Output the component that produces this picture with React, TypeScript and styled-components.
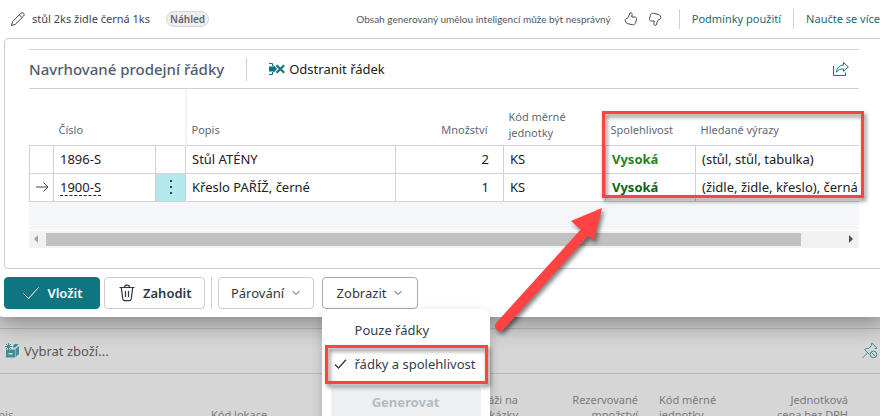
import React from "react";
import styled, { createGlobalStyle, css } from "styled-components";

const teal = "#0f7580";
const line = "#cdd0d5";
const red = "#ff4343";

const GlobalStyle = createGlobalStyle`
  *, *::before, *::after { box-sizing: border-box; }
  body {
    margin: 0;
    background: #d6d6d6;
    font-family: "Noto Sans", "Open Sans", sans-serif;
    font-size: 13px;
    line-height: 20px;
    color: #212121;
    overflow: hidden;
  }
  button { font: inherit; cursor: pointer; }
  svg { display: block; flex: none; }
`;

const Page = styled.div`
  position: relative;
  height: 100vh;
  overflow: hidden;
`;

const Dialog = styled.section`
  position: relative;
  z-index: 1;
  margin: 0 -8px 0 -4px;
  padding: 0 4px 8px 8px;
  background: #fff;
  border-radius: 0 0 8px 8px;
  box-shadow: 0 6px 24px rgba(0, 0, 0, 0.4);
`;

const DialogHeader = styled.header`
  display: flex;
  align-items: center;
  height: 38px;
  padding: 0 4px 0 6px;
`;

const PromptText = styled.span`
  margin-left: 6px;
  font-size: 11px;
  color: #3d4650;
`;

const Badge = styled.span`
  margin-left: 16px;
  height: 16px;
  padding: 0 3px;
  border: 1px solid #d3d7db;
  border-radius: 8px;
  background: #eceef0;
  color: #5c6670;
  font-size: 10px;
  font-weight: 600;
  line-height: 14px;
`;

const HeaderTools = styled.div`
  display: flex;
  align-items: center;
  margin-left: auto;
  white-space: nowrap;
`;

const Disclaimer = styled.span`
  margin-right: 8px;
  font-family: Lato, "Noto Sans", sans-serif;
  font-size: 10px;
  color: #4f5964;
`;

const IconButton = styled.button`
  display: flex;
  align-items: center;
  justify-content: center;
  width: 24px;
  height: 24px;
  padding: 0;
  border: 0;
  background: none;
  color: #3d4650;
`;

const Divider = styled.span<{ $gap: number; $height: number }>`
  flex: none;
  width: 1px;
  height: ${(p) => p.$height}px;
  margin: 0 ${(p) => p.$gap}px;
  background: ${line};
`;

const HeaderLink = styled.a`
  font-size: 11px;
  color: #1b6a72;
  text-decoration: none;
`;

const Panel = styled.div`
  padding: 10px 24px 20px;
  border: 1px solid #c6ccd3;
  border-radius: 4px;
`;

const PanelToolbar = styled.div`
  display: flex;
  align-items: center;
  height: 40px;
  border: solid ${line};
  border-width: 1px 0;
`;

const PanelTitle = styled.h2`
  margin: 0;
  font-size: 15px;
  font-weight: 500;
  color: #505c6d;
`;

const ToolbarButton = styled.button<{ $muted?: boolean }>`
  display: flex;
  align-items: center;
  gap: 4px;
  padding: 0;
  border: 0;
  background: none;
  color: ${(p) => (p.$muted ? "#585858" : "#212121")};
`;

const ShareSlot = styled.div`
  margin: 0 6px 0 auto;
`;

const GridArea = styled.div`
  position: relative;
`;

const LinesTable = styled.table`
  width: 100%;
  table-layout: fixed;
  border-collapse: collapse;
`;

const Col = styled.col<{ $w?: number }>`
  width: ${(p) => (p.$w ? `${p.$w}px` : "auto")};
`;

const HeadCell = styled.th<{ $right?: boolean; $twoLine?: boolean; $ruled?: boolean }>`
  height: 56px;
  padding: 0 ${(p) => (p.$right ? 16 : 5)}px ${(p) => (p.$twoLine ? 4 : 7)}px 5px;
  vertical-align: bottom;
  text-align: ${(p) => (p.$right ? "right" : "left")};
  font-size: 11px;
  font-weight: 400;
  line-height: 16px;
  color: #5f6977;
  ${(p) => p.$ruled && css`border-left: 2px solid #f2f3f5;`}
`;

const Cell = styled.td<{ $right?: boolean; $active?: boolean }>`
  height: 28px;
  padding: 0 ${(p) => (p.$right ? 14 : 0)}px 0 ${(p) => (p.$active ? 0 : 6)}px;
  border: 1px solid #d0d2d6;
  text-align: ${(p) => (p.$right ? "right" : "left")};
  white-space: nowrap;
  overflow: hidden;
  background: ${(p) => (p.$active ? "#b3e8ed" : "transparent")};
  &:last-child { border-right: 0; }
`;

const ItemLink = styled.a`
  display: inline-block;
  color: inherit;
  text-decoration: none;
  line-height: 16px;
  border-bottom: 1px dashed #212121;
`;

const RowMenuButton = styled.button`
  display: flex;
  align-items: center;
  justify-content: center;
  width: 100%;
  height: 27px;
  padding: 0;
  border: 0;
  background: none;
`;

const Confidence = styled.strong<{ $dark?: boolean }>`
  font-size: 13px;
  font-weight: 700;
  color: ${(p) => (p.$dark ? "#0f6414" : "#1f8424")};
`;

const EmptyRow = styled.div`
  height: 28px;
  margin-bottom: 1px;
  background: #f5f6f9;
`;

const ScrollBar = styled.div`
  display: flex;
  align-items: center;
  height: 17px;
  padding: 0 6px 0 5px;
  background: #f1f1f1;
`;

const ScrollTrack = styled.div`
  flex: 1;
  margin: 0 8px;
`;

const ScrollThumb = styled.div`
  width: 95%;
  height: 13px;
  background: #c1c1c1;
`;

const Actions = styled.div`
  display: flex;
  align-items: center;
  margin-top: 8px;
`;

const ActionButton = styled.button<{ $primary?: boolean; $open?: boolean; $strong?: boolean }>`
  display: flex;
  align-items: center;
  justify-content: center;
  gap: 8px;
  min-width: 96px;
  height: 32px;
  padding: 0 ${(p) => (p.$strong ? 12 : 8)}px 0 ${(p) => (p.$strong ? 14 : 8)}px;
  border: 1px solid ${(p) => (p.$primary ? teal : p.$open ? "#a3abb4" : "#c8cdd3")};
  border-radius: 4px;
  background: ${(p) => (p.$primary ? teal : "#fff")};
  color: ${(p) => (p.$primary ? "#fff" : "#2f3740")};
  font-weight: ${(p) => (p.$strong ? 600 : 400)};
  & + & { margin-left: 4px; }
`;

const MenuAnchor = styled.div`
  position: relative;
  margin-left: 8px;
`;

const Menu = styled.div`
  position: absolute;
  top: 100%;
  left: 0;
  width: 168px;
  padding: 4px 0 12px;
  border-radius: 8px;
  background: #fff;
  box-shadow: 0 4px 12px rgba(0, 0, 0, 0.2);
`;

const MenuItem = styled.button`
  position: relative;
  display: grid;
  grid-template-columns: 14px 1fr;
  align-items: center;
  gap: 7px;
  width: 100%;
  height: 34px;
  padding: 0 0 0 12px;
  border: 0;
  background: none;
  color: #333d4a;
  text-align: left;
  white-space: nowrap;
`;

const GenerateButton = styled.button`
  display: block;
  width: calc(100% - 18px);
  height: 32px;
  margin: 5px 9px 0;
  border: 0;
  border-radius: 4px;
  background: #eeeff1;
  color: #b4bac1;
  font-weight: 700;
`;

const Highlight = styled.span<{ $inset: string }>`
  position: absolute;
  inset: ${(p) => p.$inset};
  border: 3px solid ${red};
  filter: drop-shadow(2px 3px 2px rgba(0, 0, 0, 0.5));
  pointer-events: none;
`;

const Arrow = styled.svg`
  position: absolute;
  z-index: 2;
  left: 490px;
  top: 200px;
  filter: drop-shadow(2px 3px 2px rgba(0, 0, 0, 0.5));
  pointer-events: none;
`;

const Backdrop = styled.section`
  margin-top: 11px;
  border-top: 1px solid #bababa;
`;

const BackdropToolbar = styled.div`
  display: flex;
  align-items: center;
  justify-content: space-between;
  height: 45px;
  padding: 0 2px 0 5px;
  border-bottom: 1px solid #bababa;
`;

const BackdropTable = styled.table`
  width: calc(100% + 20px);
  margin-left: -20px;
  table-layout: fixed;
  border-collapse: collapse;
`;

const BackdropHead = styled(HeadCell)`
  padding-bottom: 8px;
  line-height: 15px;
  color: #767b81;
`;

const PencilIcon = () => (
  <svg width="16" height="16" viewBox="0 0 16 16" fill="none" stroke="#3d4650" strokeLinejoin="round">
    <path d="M10.8 2.3a1.9 1.9 0 0 1 2.8 2.8L5.3 13.3 1.5 14.5l1.1-3.9Z M9.3 3.9l2.8 2.8" />
  </svg>
);

const thumbPath =
  "M7.6 1.6c1 .1 1.7 1 1.5 2.1L8.7 6h3c1.3 0 2.1 1 1.8 2.2l-.9 3.5c-.4 1.5-1.7 2.3-3.2 2l-4.9-1.1c-.8-.2-1.3-.6-1.6-1.4l-.6-1.5c-.3-.8 0-1.5.7-1.9l1.6-.8c.4-.2.7-.6.9-1l.9-3c.2-.8.6-1.4 1.2-1.4Z";

const ThumbIcon = ({ down }: { down?: boolean }) => (
  <svg width="16" height="16" viewBox="0 0 16 16" fill="none" stroke="currentColor" strokeLinejoin="round">
    <path d={thumbPath} transform={down ? "rotate(180 8 8)" : undefined} />
  </svg>
);

const DeleteLineIcon = () => (
  <svg width="16" height="14" viewBox="0 0 16 14" fill="none" stroke={teal}>
    <path d="M0 1.5H3.5V4 M0 12.5H3.5V10" />
    <path d="M0 4.500H4.500V3L8 7 4.500 11V9.500H0Z" fill={teal} stroke="none" />
    <path d="M7.500 3.200l7.700 7.600M15.200 3.200L7.500 10.800" strokeWidth="2.200" />
  </svg>
);

const ShareIcon = () => (
  <svg width="16" height="16" viewBox="0 0 16 16" fill="none" stroke={teal} strokeLinejoin="round">
    <path d="M.5 5V14.500H12.500V11.500" />
    <path d="M10.500 1.500L15.400 6 10.500 10.300V7.900C7.500 7.700 5.300 8.600 3.400 11.200 3.700 7 6.300 4.300 10.500 4Z" />
  </svg>
);

const ArrowRightIcon = () => (
  <svg width="13" height="12" viewBox="0 0 13 12" fill="none" stroke="#444">
    <path d="M0 6H12M7.500 1.500L12 6 7.500 10.500" />
  </svg>
);

const DotsIcon = () => (
  <svg width="4" height="16" viewBox="0 0 4 16" fill="#2b4a50">
    <rect x="1" y="1" width="2" height="2" />
    <rect x="1" y="7" width="2" height="2" />
    <rect x="1" y="13" width="2" height="2" />
  </svg>
);

const TriangleIcon = ({ right }: { right?: boolean }) => (
  <svg width="4" height="8" viewBox="0 0 4 8" fill={right ? "#505050" : "#a3a3a3"}>
    <path d={right ? "M0 0L4 4 0 8Z" : "M4 0L0 4 4 8Z"} />
  </svg>
);

const CheckIcon = ({ wide }: { wide?: boolean }) =>
  wide ? (
    <svg width="16" height="14" viewBox="0 0 16 14" fill="none" stroke="#fff">
      <path d="M.5 7.500L5.500 12.500 15.500 1.500" />
    </svg>
  ) : (
    <svg width="13" height="12" viewBox="0 0 13 12" fill="none" stroke="#333d4a" strokeWidth="1.400">
      <path d="M1 6.500L4.500 10 12 1.800" />
    </svg>
  );

const TrashIcon = () => (
  <svg width="16" height="18" viewBox="0 0 16 18" fill="none" stroke="#2f3740" strokeWidth="1.200">
    <path d="M.5 3.500H15.500M5.500 3.500C5.500 .2 10.500 .2 10.500 3.500" />
    <path d="M2.300 3.500L3.700 14.600C3.900 16.200 4.600 16.700 5.600 16.700H10.400C11.400 16.700 12.100 16.200 12.300 14.600L13.700 3.500" />
    <path d="M6.500 7V13M9.500 7V13" />
  </svg>
);

const ChevronIcon = () => (
  <svg width="8" height="6" viewBox="0 0 8 6" fill="none" stroke="#4a535d">
    <path d="M.5 1L4 4.500 7.500 1" />
  </svg>
);

const BoxIcon = () => (
  <svg width="15" height="15" viewBox="0 0 15 15" fill="none">
    <path d="M1 6.500H10V14.500H1Z M10.500 6L14 3V11L10.500 14.300Z M8 3L9.500 1H13.500L10.500 4.500H8Z" fill="#3f8f95" />
    <rect x="3.500" y="10" width="4" height="1.500" fill="#d6d6d6" />
    <path d="M3.500 0V7M0 3.500H7M1 1L6 6M6 1L1 6" stroke="#3f8f95" />
  </svg>
);

const UnpinIcon = () => (
  <svg width="16" height="17" viewBox="0 0 16 17" fill="none" stroke="#3f8f95" strokeLinejoin="round">
    <path d="M.5 16L5.500 11M7.500 12.500L2.500 7.500C4 6.500 5.300 6.300 6.600 6.500L9.500 3.500 9.800 1 15 6.200 12.600 6.700" />
    <circle cx="11.500" cy="12.500" r="3.300" />
    <path d="M9.200 10.200L13.800 14.800" />
  </svg>
);

type SalesLine = {
  no: string;
  description: string;
  quantity: number;
  unit: string;
  confidence: string;
  terms: string;
  current?: boolean;
};

const salesLines: SalesLine[] = [
  { no: "1896-S", description: "Stůl ATÉNY", quantity: 2, unit: "KS", confidence: "Vysoká", terms: "(stůl, stůl, tabulka)" },
  { no: "1900-S", description: "Křeslo PAŘÍŽ, černé", quantity: 1, unit: "KS", confidence: "Vysoká", terms: "(židle, židle, křeslo), černá", current: true },
];

const LineRow = ({ item }: { item: SalesLine }) => (
  <tr>
    <Cell>{item.current && <ArrowRightIcon />}</Cell>
    <Cell>{item.current ? <ItemLink href="#item">{item.no}</ItemLink> : item.no}</Cell>
    <Cell $active={item.current}>
      {item.current && (
        <RowMenuButton type="button" aria-label="Další možnosti">
          <DotsIcon />
        </RowMenuButton>
      )}
    </Cell>
    <Cell>{item.description}</Cell>
    <Cell $right>{item.quantity}</Cell>
    <Cell>{item.unit}</Cell>
    <Cell>
      <Confidence $dark={item.current}>{item.confidence}</Confidence>
    </Cell>
    <Cell>{item.terms}</Cell>
  </tr>
);

export default function App() {
  return (
    <Page>
      <GlobalStyle />
      <Dialog>
        <DialogHeader>
          <PencilIcon />
          <PromptText>stůl 2ks židle černá 1ks</PromptText>
          <Badge>Náhled</Badge>
          <HeaderTools>
            <Disclaimer>Obsah generovaný umělou inteligencí může být nesprávný</Disclaimer>
            <IconButton type="button" aria-label="Líbí se mi"><ThumbIcon /></IconButton>
            <IconButton type="button" aria-label="Nelíbí se mi"><ThumbIcon down /></IconButton>
            <Divider $gap={12} $height={20} />
            <HeaderLink href="#terms">Podmínky použití</HeaderLink>
            <Divider $gap={12} $height={20} />
            <HeaderLink href="#learn">Naučte se více</HeaderLink>
          </HeaderTools>
        </DialogHeader>

        <Panel>
          <PanelToolbar>
            <PanelTitle>Navrhované prodejní řádky</PanelTitle>
            <Divider $gap={22} $height={23} />
            <ToolbarButton type="button"><DeleteLineIcon />Odstranit řádek</ToolbarButton>
            <ShareSlot>
              <IconButton type="button" aria-label="Sdílet"><ShareIcon /></IconButton>
            </ShareSlot>
          </PanelToolbar>

          <GridArea>
            <LinesTable>
              <colgroup>
                <Col $w={24} /><Col $w={102} /><Col $w={30} /><Col $w={210} />
                <Col $w={108} /><Col $w={102} /><Col $w={90} /><Col />
              </colgroup>
              <thead>
                <tr>
                  <HeadCell />
                  <HeadCell>Číslo</HeadCell>
                  <HeadCell />
                  <HeadCell $ruled>Popis</HeadCell>
                  <HeadCell $right>Množství</HeadCell>
                  <HeadCell $twoLine>Kód měrné<br />jednotky</HeadCell>
                  <HeadCell>Spolehlivost</HeadCell>
                  <HeadCell>Hledané výrazy</HeadCell>
                </tr>
              </thead>
              <tbody>
                {salesLines.map((item) => <LineRow key={item.no} item={item} />)}
              </tbody>
            </LinesTable>
            <EmptyRow />
            <ScrollBar>
              <TriangleIcon />
              <ScrollTrack><ScrollThumb /></ScrollTrack>
              <TriangleIcon right />
            </ScrollBar>
            <Highlight $inset="22px -5px 50px 573px" />
          </GridArea>
        </Panel>

        <Actions>
          <ActionButton type="button" $primary $strong><CheckIcon wide />Vložit</ActionButton>
          <ActionButton type="button" $strong><TrashIcon />Zahodit</ActionButton>
          <Divider $gap={6} $height={32} />
          <ActionButton type="button">Párování<ChevronIcon /></ActionButton>
          <MenuAnchor>
            <ActionButton type="button" $open aria-haspopup="menu" aria-expanded="true">Zobrazit<ChevronIcon /></ActionButton>
            <Menu role="menu">
              <MenuItem type="button" role="menuitemradio" aria-checked="false">
                <span />Pouze řádky
              </MenuItem>
              <MenuItem type="button" role="menuitemradio" aria-checked="true">
                <CheckIcon />řádky a spolehlivost
                <Highlight $inset="-2px 2px -3px 3px" />
              </MenuItem>
              <GenerateButton type="button" disabled>Generovat</GenerateButton>
            </Menu>
          </MenuAnchor>
        </Actions>
      </Dialog>

      <Backdrop>
        <BackdropToolbar>
          <ToolbarButton type="button" $muted><BoxIcon />Vybrat zboží...</ToolbarButton>
          <UnpinIcon />
        </BackdropToolbar>
        <BackdropTable>
          <colgroup>
            <Col $w={226} /><Col $w={190} /><Col $w={138} /><Col $w={120} />
            <Col $w={110} /><Col $w={100} /><Col />
          </colgroup>
          <thead>
            <tr>
              <BackdropHead>Popis</BackdropHead>
              <BackdropHead>Kód lokace</BackdropHead>
              <BackdropHead $right>montáži na<br />zakázky</BackdropHead>
              <BackdropHead $right>Rezervované<br />množství</BackdropHead>
              <BackdropHead>Kód měrné<br />jednotky</BackdropHead>
              <BackdropHead $right>Jednotková<br />cena bez DPH</BackdropHead>
              <BackdropHead />
            </tr>
          </thead>
        </BackdropTable>
      </Backdrop>

      <Arrow width="120" height="140" viewBox="0 0 120 140" aria-hidden="true">
        <path d="M10 126L96 31" stroke={red} strokeWidth="10" strokeLinecap="round" />
        <path d="M112 8L81 21 104 41Z" fill={red} />
      </Arrow>
    </Page>
  );
}
